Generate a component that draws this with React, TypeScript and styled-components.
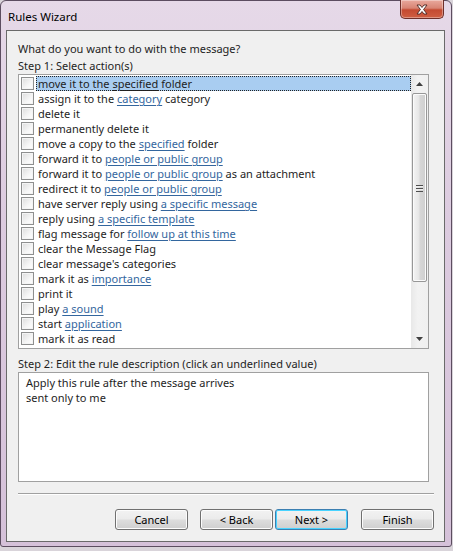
import styled, { createGlobalStyle } from 'styled-components'

const GlobalStyle = createGlobalStyle`
    html, body {
        margin: 0;
        padding: 0;
        background: #d9d4da;
    }
    body {
        font-family: 'Segoe UI', 'Noto Sans', 'Open Sans', sans-serif;
        font-size: 11px;
        color: #1e1e1e;
    }
`

const Frame = styled.div`
    box-sizing: border-box;
    width: 452px;
    height: 547px;
    border: 1px solid #5c4d60;
    border-radius: 6px 6px 3px 3px;
    background: linear-gradient(to bottom, #e6d9e8 0%, #dccbdf 40%, #d5c1d9 100%);
    display: flex;
    flex-direction: column;
    padding: 0 6px 4px 5px;
`

const TitleBar = styled.div`
    height: 29px;
    display: flex;
    justify-content: space-between;
    align-items: flex-start;
`

const Title = styled.div`
    margin: 8px 0 0 2px;
    font-size: 11.5px;
    line-height: 15px;
    color: #000;
`

const CloseButton = styled.div`
    width: 44px;
    height: 19px;
    margin-right: 1px;
    margin-top: -1px;
    box-sizing: border-box;
    border: 1px solid #6e2f2a;
    border-top: none;
    border-radius: 0 0 5px 5px;
    background: linear-gradient(to bottom, #e9a99d 0%, #d88474 45%, #c44a31 55%, #cf5e42 100%);
    box-shadow: inset 0 0 0 1px rgba(255, 255, 255, 0.35);
    display: flex;
    align-items: center;
    justify-content: center;
`

const Client = styled.div`
    flex: 1;
    box-sizing: border-box;
    border: 1px solid #6a6a6a;
    background: #f0f0f0;
    padding: 10px 10px 0 11px;
    display: flex;
    flex-direction: column;
`

const Label = styled.div<{ $top?: number }>`
    line-height: 15px;
    margin-top: ${p => p.$top ?? 0}px;
    white-space: nowrap;
`

const ListBox = styled.div`
    box-sizing: border-box;
    margin-top: 1px;
    margin-right: 5px;
    height: 275px;
    border: 1px solid #a0a0a0;
    background: #fff;
    display: flex;
`

const Rows = styled.div`
    flex: 1;
    padding: 1px 0 0 2px;
    overflow: hidden;
`

const Row = styled.div`
    height: 15px;
    display: flex;
    align-items: center;
`

const Check = styled.span`
    box-sizing: border-box;
    width: 13px;
    height: 13px;
    flex: none;
    border: 1px solid #8e8f8f;
    background: linear-gradient(135deg, #dcdcdc 0%, #f6f6f6 60%, #fff 100%);
    box-shadow: inset 0 0 0 1px #f4f4f4;
    margin-right: 2px;
`

const ItemText = styled.span<{ $selected?: boolean }>`
    flex: 1;
    height: 15px;
    line-height: 15px;
    padding-left: 2px;
    white-space: nowrap;
    background: ${p => (p.$selected ? '#a9cdf1' : 'transparent')};
    outline: ${p => (p.$selected ? '1px dotted #222' : 'none')};
    outline-offset: -1px;
`

const Link = styled.span<{ $selected?: boolean }>`
    color: ${p => (p.$selected ? '#1e1e1e' : '#33669e')};
    text-decoration: underline;
    text-underline-offset: 2px;
`

const ScrollBar = styled.div`
    width: 17px;
    flex: none;
    background: linear-gradient(to right, #e8e8e8, #f2f2f2 40%, #f0f0f0);
    display: flex;
    flex-direction: column;
    align-items: center;
`

const Arrow = styled.div`
    height: 18px;
    width: 17px;
    display: flex;
    align-items: center;
    justify-content: center;
`

const Thumb = styled.div`
    box-sizing: border-box;
    width: 15px;
    height: 189px;
    border: 1px solid #979797;
    border-radius: 2px;
    background: linear-gradient(to right, #f4f4f4 0%, #e6e6e6 45%, #d6d6d6 55%, #cfcfcf 100%);
    box-shadow: inset 0 0 0 1px #fbfbfb;
    display: flex;
    align-items: center;
    justify-content: center;
`

const Grip = styled.div`
    width: 7px;
    height: 7px;
    background: repeating-linear-gradient(to bottom, #4f4f4f 0, #4f4f4f 1px, #eee 1px, #eee 2px, transparent 2px, transparent 3px);
    margin-top: 2px;
`

const Track = styled.div`
    flex: 1;
`

const DescBox = styled.div`
    box-sizing: border-box;
    margin-top: 1px;
    margin-right: 5px;
    height: 110px;
    border: 1px solid #a0a0a0;
    background: #fff;
    padding: 2px 7px;
    line-height: 15px;
`

const Separator = styled.div`
    margin-top: 11px;
    height: 1px;
    background: #a0a0a0;
    border-bottom: 1px solid #fff;
`

const ButtonRow = styled.div`
    margin-top: 14px;
    display: flex;
    justify-content: flex-end;
`

const Button = styled.div<{ $default?: boolean; $gap: number }>`
    box-sizing: border-box;
    width: 73px;
    height: 21px;
    margin-left: ${p => p.$gap}px;
    border: 1px solid ${p => (p.$default ? '#3c7fb1' : '#707070')};
    border-radius: 3px;
    background: linear-gradient(to bottom, #f2f2f2 0%, #ebebeb 48%, #dddddd 52%, #cfcfcf 100%);
    box-shadow: inset 0 0 0 1px ${p => (p.$default ? '#48d3ff' : '#fcfcfc')};
    display: flex;
    align-items: center;
    justify-content: center;
    line-height: 15px;
    color: #000;
`

type Part = { text: string; link?: boolean }

const actions: Part[][] = [
    [{ text: 'move it to the ' }, { text: 'specified', link: true }, { text: ' folder' }],
    [{ text: 'assign it to the ' }, { text: 'category', link: true }, { text: ' category' }],
    [{ text: 'delete it' }],
    [{ text: 'permanently delete it' }],
    [{ text: 'move a copy to the ' }, { text: 'specified', link: true }, { text: ' folder' }],
    [{ text: 'forward it to ' }, { text: 'people or public group', link: true }],
    [{ text: 'forward it to ' }, { text: 'people or public group', link: true }, { text: ' as an attachment' }],
    [{ text: 'redirect it to ' }, { text: 'people or public group', link: true }],
    [{ text: 'have server reply using ' }, { text: 'a specific message', link: true }],
    [{ text: 'reply using ' }, { text: 'a specific template', link: true }],
    [{ text: 'flag message for ' }, { text: 'follow up at this time', link: true }],
    [{ text: 'clear the Message Flag' }],
    [{ text: "clear message's categories" }],
    [{ text: 'mark it as ' }, { text: 'importance', link: true }],
    [{ text: 'print it' }],
    [{ text: 'play ' }, { text: 'a sound', link: true }],
    [{ text: 'start ' }, { text: 'application', link: true }],
    [{ text: 'mark it as read' }],
]

function ArrowIcon({ down }: { down?: boolean }) {
    return (
        <svg width="7" height="4" viewBox="0 0 7 4">
            <polygon points={down ? '0,0 7,0 3.5,4' : '3.5,0 7,4 0,4'} fill="#404040" />
        </svg>
    )
}

export default function App() {
    return (
        <>
            <GlobalStyle />
            <Frame>
                <TitleBar>
                    <Title>Rules Wizard</Title>
                    <CloseButton>
                        <svg width="14" height="11" viewBox="0 0 14 11">
                            <path
                                d="M2 1 L5 1 L7 3.5 L9 1 L12 1 L8.6 5.5 L12 10 L9 10 L7 7.5 L5 10 L2 10 L5.4 5.5 Z"
                                fill="#fff"
                                stroke="#4a2520"
                                strokeWidth="0.9"
                                strokeLinejoin="round"
                            />
                        </svg>
                    </CloseButton>
                </TitleBar>
                <Client>
                    <Label>What do you want to do with the message?</Label>
                    <Label $top={2}>Step 1: Select action(s)</Label>
                    <ListBox>
                        <Rows>
                            {actions.map((parts, i) => (
                                <Row key={i}>
                                    <Check />
                                    <ItemText $selected={i === 0}>
                                        {parts.map((p, j) =>
                                            p.link ? (
                                                <Link key={j} $selected={i === 0}>
                                                    {p.text}
                                                </Link>
                                            ) : (
                                                <span key={j}>{p.text}</span>
                                            )
                                        )}
                                    </ItemText>
                                </Row>
                            ))}
                        </Rows>
                        <ScrollBar>
                            <Arrow>
                                <ArrowIcon />
                            </Arrow>
                            <Thumb>
                                <Grip />
                            </Thumb>
                            <Track />
                            <Arrow>
                                <ArrowIcon down />
                            </Arrow>
                        </ScrollBar>
                    </ListBox>
                    <Label $top={7}>Step 2: Edit the rule description (click an underlined value)</Label>
                    <DescBox>
                        Apply this rule after the message arrives
                        <br />
                        sent only to me
                    </DescBox>
                    <Separator />
                    <ButtonRow>
                        <Button $gap={0}>Cancel</Button>
                        <Button $gap={12}>&lt; Back</Button>
                        <Button $gap={2} $default>
                            Next &gt;
                        </Button>
                        <Button $gap={13}>Finish</Button>
                    </ButtonRow>
                </Client>
            </Frame>
        </>
    )
}
